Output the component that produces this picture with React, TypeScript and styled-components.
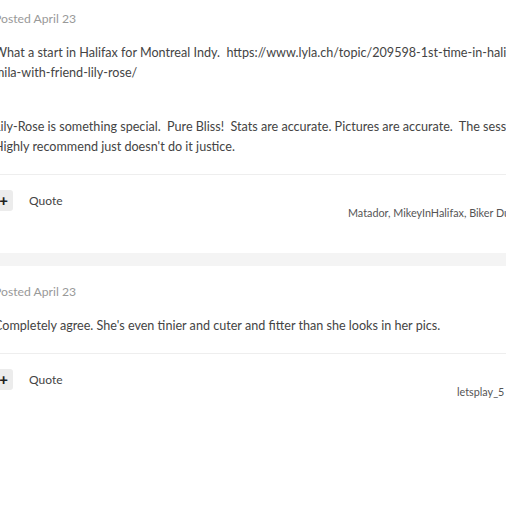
import styled, { createGlobalStyle } from 'styled-components';

const GlobalStyle = createGlobalStyle`
    html, body{
        margin: 0;
        padding: 0;
        background: #fff;
        overflow: hidden;
    }
    body{
        font-family: Lato, "Open Sans", "Liberation Sans", sans-serif;
        color: #444;
    }
`

const Thread = styled.div`
    width: 760px;
    margin: -7px 0 0 -6px;
`

const Post = styled.article`
    display: flex;
    flex-direction: column;
    padding-top: 18px;
    background: #fff;
`

const Meta = styled.div`
    font-size: 12.2px;
    line-height: 16px;
    color: #999;
`

const Body = styled.div`
    padding: 16px 0 3px;
    font-size: 12.6px;
    line-height: 20px;
    color: #444;

    p{
        margin: 0 0 14px;
    }
    .line{
        display: block;
        white-space: nowrap;
    }
    .blank{
        height: 20px;
    }
`

const Footer = styled.div`
    border-top: 1px solid #eee;
    padding: 15px 0 33px;
    display: flex;
    flex-direction: column;
`

const Actions = styled.div`
    display: flex;
    align-items: center;
    gap: 16px;
`

const PlusBtn = styled.span`
    display: grid;
    place-items: center;
    width: 19px;
    height: 21px;
    border-radius: 3px;
    background: #ececec;
    color: #222;
    font-size: 15px;
    font-weight: 900;
    line-height: 1;
`

const QuoteLink = styled.span`
    font-size: 12px;
    color: #444;
`

const Reactions = styled.div<{ $indent: number }>`
    padding-left: ${p => p.$indent}px;
    margin-top: -5px;
    font-size: 10.8px;
    line-height: 14px;
    color: #555;
    white-space: nowrap;
`

const Divider = styled.div`
    height: 13px;
    background: #f4f4f4;
`

type PostData = {
    date: string;
    paragraphs: (string[] | null)[];
    reactions: string;
    indent: number;
}

const posts: PostData[] = [
    {
        date: 'Posted April 23',
        paragraphs: [
            [
                'What a start in Halifax for Montreal Indy.\u00a0 https://www.lyla.ch/topic/209598-1st-time-in-halifax-and-',
                'mila-with-friend-lily-rose/',
            ],
            null,
            [
                'Lily-Rose is something special.\u00a0 Pure Bliss!\u00a0 Stats are accurate. Pictures are accurate.\u00a0 The session was amazing.',
                'Highly recommend just doesn\'t do it justice.',
            ],
        ],
        reactions: 'Matador, MikeyInHalifax, Biker Dude and 3 others',
        indent: 354,
    },
    {
        date: 'Posted April 23',
        paragraphs: [
            ['Completely agree. She\'s even tinier and cuter and fitter than she looks in her pics.'],
        ],
        reactions: 'letsplay_5 likes this',
        indent: 463,
    },
]

function ForumPost({ data }: { data: PostData }) {
    return (
        <Post>
            <Meta>{data.date}</Meta>
            <Body>
                {data.paragraphs.map((lines, i) =>
                    lines === null ? (
                        <div className='blank' key={i} />
                    ) : (
                        <p key={i}>
                            {lines.map((l, j) => <span className='line' key={j}>{l}</span>)}
                        </p>
                    )
                )}
            </Body>
            <Footer>
                <Actions>
                    <PlusBtn>+</PlusBtn>
                    <QuoteLink>Quote</QuoteLink>
                </Actions>
                <Reactions $indent={data.indent}>{data.reactions}</Reactions>
            </Footer>
        </Post>
    )
}

export default function App() {
    return (
        <>
            <GlobalStyle />
            <Thread>
                {posts.map((p, i) => (
                    <div key={i}>
                        {i > 0 && <Divider />}
                        <ForumPost data={p} />
                    </div>
                ))}
            </Thread>
        </>
    )
}
